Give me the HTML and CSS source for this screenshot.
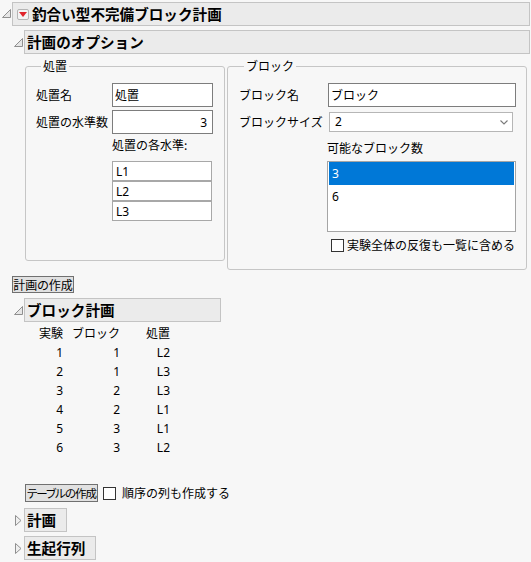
FILE: index.html
```html
<!DOCTYPE html>
<html lang="ja">
<head>
<meta charset="utf-8">
<title>釣合い型不完備ブロック計画</title>
<link rel="stylesheet" href="styles.css">
</head>
<body>
<div class="outline outline--root">
  <div class="ol-head">
    <span class="tri"><svg width="9" height="9" viewBox="0 0 9 9"><path d="M8.5 0.5 L8.5 8.5 L0.5 8.5 Z" fill="#e6e6e6" stroke="#8f8f8f"/></svg></span>
    <div class="ol-box ol-box--fill">
      <span class="menu-btn"><svg width="8" height="5" viewBox="0 0 8 5"><path d="M0 0 L8 0 L4 5 Z" fill="#e0242b"/></svg></span>
      釣合い型不完備ブロック計画
    </div>
  </div>
  <div class="ol-body">
    <div class="outline outline--opts">
      <div class="ol-head">
        <span class="tri"><svg width="9" height="9" viewBox="0 0 9 9"><path d="M8.5 0.5 L8.5 8.5 L0.5 8.5 Z" fill="#e6e6e6" stroke="#8f8f8f"/></svg></span>
        <div class="ol-box ol-box--fill">計画のオプション</div>
      </div>
      <div class="ol-body ol-body--nested">
        <div class="groups">
          <fieldset class="group group--treat">
            <legend>処置</legend>
            <div class="form form--treat">
              <span class="lbl">処置名</span>
              <input class="inp" type="text" value="処置">
              <span class="lbl">処置の水準数</span>
              <input class="inp inp--num" type="text" value="3">
              <span class="lbl lbl--col2 lbl--levels">処置の各水準:</span>
              <div class="levels">
                <input class="inp inp--level" type="text" value="L1">
                <input class="inp inp--level" type="text" value="L2">
                <input class="inp inp--level" type="text" value="L3">
              </div>
            </div>
          </fieldset>
          <fieldset class="group group--block">
            <legend>ブロック</legend>
            <div class="form form--block">
              <span class="lbl">ブロック名</span>
              <input class="inp" type="text" value="ブロック">
              <span class="lbl">ブロックサイズ</span>
              <div class="select"><span>2</span><svg width="8" height="5" viewBox="0 0 8 5"><path d="M0.5 0.5 L4 4 L7.5 0.5" fill="none" stroke="#7a7a7a" stroke-width="1.1"/></svg></div>
              <span class="lbl lbl--col2 lbl--count">可能なブロック数</span>
              <div class="listbox">
                <div class="opt opt--sel">3</div>
                <div class="opt">6</div>
              </div>
              <label class="check check--col2"><span class="box"></span><span>実験全体の反復も一覧に含める</span></label>
            </div>
          </fieldset>
        </div>
      </div>
    </div>

    <button class="btn btn--make" type="button">計画の作成</button>

    <div class="outline outline--design">
      <div class="ol-head">
        <span class="tri"><svg width="9" height="9" viewBox="0 0 9 9"><path d="M8.5 0.5 L8.5 8.5 L0.5 8.5 Z" fill="#e6e6e6" stroke="#8f8f8f"/></svg></span>
        <div class="ol-box ol-box--design">ブロック計画</div>
      </div>
      <div class="ol-body ol-body--nested">
        <table class="runs">
          <thead>
            <tr><th>実験</th><th>ブロック</th><th>処置</th></tr>
          </thead>
          <tbody>
            <tr><td>1</td><td>1</td><td>L2</td></tr>
            <tr><td>2</td><td>1</td><td>L3</td></tr>
            <tr><td>3</td><td>2</td><td>L3</td></tr>
            <tr><td>4</td><td>2</td><td>L1</td></tr>
            <tr><td>5</td><td>3</td><td>L1</td></tr>
            <tr><td>6</td><td>3</td><td>L2</td></tr>
          </tbody>
        </table>
        <div class="table-row">
          <button class="btn btn--table" type="button">テーブルの作成</button>
          <label class="check"><span class="box"></span><span>順序の列も作成する</span></label>
        </div>
      </div>
    </div>

    <div class="outline outline--closed outline--plan">
      <div class="ol-head">
        <span class="tri"><svg width="7" height="11" viewBox="0 0 7 11"><path d="M0.5 0.5 L6 5.5 L0.5 10.5 Z" fill="#efefef" stroke="#8f8f8f"/></svg></span>
        <div class="ol-box">計画</div>
      </div>
    </div>
    <div class="outline outline--closed outline--inc">
      <div class="ol-head">
        <span class="tri"><svg width="7" height="11" viewBox="0 0 7 11"><path d="M0.5 0.5 L6 5.5 L0.5 10.5 Z" fill="#efefef" stroke="#8f8f8f"/></svg></span>
        <div class="ol-box">生起行列</div>
      </div>
    </div>
  </div>
</div>
</body>
</html>
```
FILE: styles.css
```css
* { box-sizing: border-box; }
html, body { margin: 0; padding: 0; }
body {
  width: 531px;
  height: 562px;
  overflow: hidden;
  background: #f7f7f7;
  color: #000;
  font-family: "Noto Sans", "Noto Sans CJK JP", sans-serif;
  font-size: 12px;
  line-height: 16px;
}

/* outline nodes */
.outline--root { margin-top: 2px; margin-right: 1px; }
.outline--opts { margin-top: 4px; }
.outline--design { margin-top: 5px; }
.outline--plan { margin-top: 6px; }
.outline--inc { margin-top: 4px; }

.ol-head { display: flex; align-items: center; }
.tri { width: 12px; flex: none; display: flex; justify-content: center; align-items: center; }
.tri svg { display: block; }
.outline--root > .ol-head .tri svg { margin-bottom: 2px; }

.ol-box {
  height: 24px;
  border: 1px solid #c4c4c4;
  background: #ebebeb;
  display: flex;
  align-items: center;
  padding: 0 10px 0 2px;
  font-family: "Noto Sans CJK JP", sans-serif;
  font-weight: 700;
  font-size: 14.6px;
  white-space: nowrap;
}
.ol-box--fill { flex: 1; }
.ol-box--design { width: 197px; }

.menu-btn {
  width: 12px;
  height: 11px;
  border: 1px solid #b5b5b5;
  border-radius: 2px;
  background: #f3f3f3;
  display: flex;
  align-items: center;
  justify-content: center;
  margin: 0 3px 0 2px;
  flex: none;
}
.menu-btn svg { display: block; }

.ol-body { padding-left: 12px; }
.ol-body--nested { padding-left: 13px; }

/* group boxes */
.groups { display: flex; align-items: flex-start; gap: 2px; margin-top: 4px; }
.group {
  margin: 0;
  border: 1px solid #c6c6c6;
  border-radius: 3px;
  min-width: 0;
}
.group legend {
  margin-left: 5px;
  padding: 0 2px;
  line-height: 16px;
  font-family: "Noto Sans CJK JP", sans-serif;
}
.group--treat { width: 200px; padding: 9px 11px 39px 10px; }
.group--block { width: 300px; padding: 9px 10px 16px 11px; }

.form { display: grid; row-gap: 3px; align-items: center; }
.form--treat { grid-template-columns: 76px 101px; grid-template-rows: 24px 24px auto auto; }
.form--block { grid-template-columns: 89px 188px; grid-template-rows: 24px 24px auto auto auto; }

.lbl { font-family: "Noto Sans CJK JP", sans-serif; white-space: nowrap; }
.lbl--col2 { grid-column: 2; }
.lbl--count { margin-left: -1px; margin-top: 3px; }

.inp {
  font: inherit;
  font-family: "Noto Sans", "Noto Sans CJK JP", sans-serif;
  width: 100%;
  height: 24px;
  margin: 0;
  padding: 0 5px 0 2px;
  border: 1px solid #7d7d7d;
  background: #fff;
  color: #000;
  outline: none;
}
.inp--num { text-align: right; }

.levels { grid-column: 2; display: flex; flex-direction: column; margin-top: 5px; width: 100px; }
.inp--level { height: 20px; border-color: #a8a8a8; padding-left: 3px; }

.select {
  width: 184px;
  height: 20px;
  margin-left: 1px;
  border: 1px solid #b6b6b6;
  background: #fff;
  display: flex;
  align-items: center;
  justify-content: space-between;
  padding: 0 4px 0 5px;
}
.select svg { display: block; }

.listbox {
  grid-column: 2;
  width: 189px;
  height: 71px;
  margin-left: -1px;
  margin-top: 2px;
  border: 1px solid #a5a5a5;
  background: #fff;
  padding: 0 1px;
}
.opt { height: 23px; line-height: 23px; padding-left: 3px; }
.opt--sel { background: #0078d7; color: #fff; }

.check { display: flex; align-items: center; font-family: "Noto Sans CJK JP", sans-serif; white-space: nowrap; }
.check--col2 { grid-column: 2; margin-top: 2px; margin-left: 3px; }
.box {
  width: 13px;
  height: 13px;
  border: 1px solid #333;
  background: #fff;
  margin-right: 3px;
  flex: none;
}

/* buttons */
.btn {
  display: block;
  font: inherit;
  font-family: "Noto Sans CJK JP", sans-serif;
  font-feature-settings: "palt";
  font-size: 12px;
  line-height: 15px;
  height: 17px;
  padding: 0;
  margin: 0;
  border: 1px solid #707070;
  background: #e1e1e1;
  color: #000;
  white-space: nowrap;
  text-align: center;
}
.btn--make { margin-top: 6px; width: 62px; }
.btn--table { width: 73px; height: 18px; font-size: 11.5px; letter-spacing: -1px; flex: none; }

/* run table */
.runs {
  border-collapse: collapse;
  table-layout: fixed;
  width: 145px;
  font-family: "Noto Sans", "Noto Sans CJK JP", sans-serif;
}
.runs th, .runs td { padding: 0; text-align: right; font-weight: 400; }
.runs th { height: 21px; line-height: 21px; font-family: "Noto Sans CJK JP", sans-serif; }
.runs td { height: 19px; line-height: 19px; }
.runs th:nth-child(1), .runs td:nth-child(1) { width: 38px; }
.runs th:nth-child(2), .runs td:nth-child(2) { width: 57px; }
.runs th:nth-child(3), .runs td:nth-child(3) { width: 50px; }

.table-row { display: flex; align-items: center; margin-top: 27px; }
.table-row .check { margin-left: 5px; }
.table-row .box { margin-right: 6px; }
```
